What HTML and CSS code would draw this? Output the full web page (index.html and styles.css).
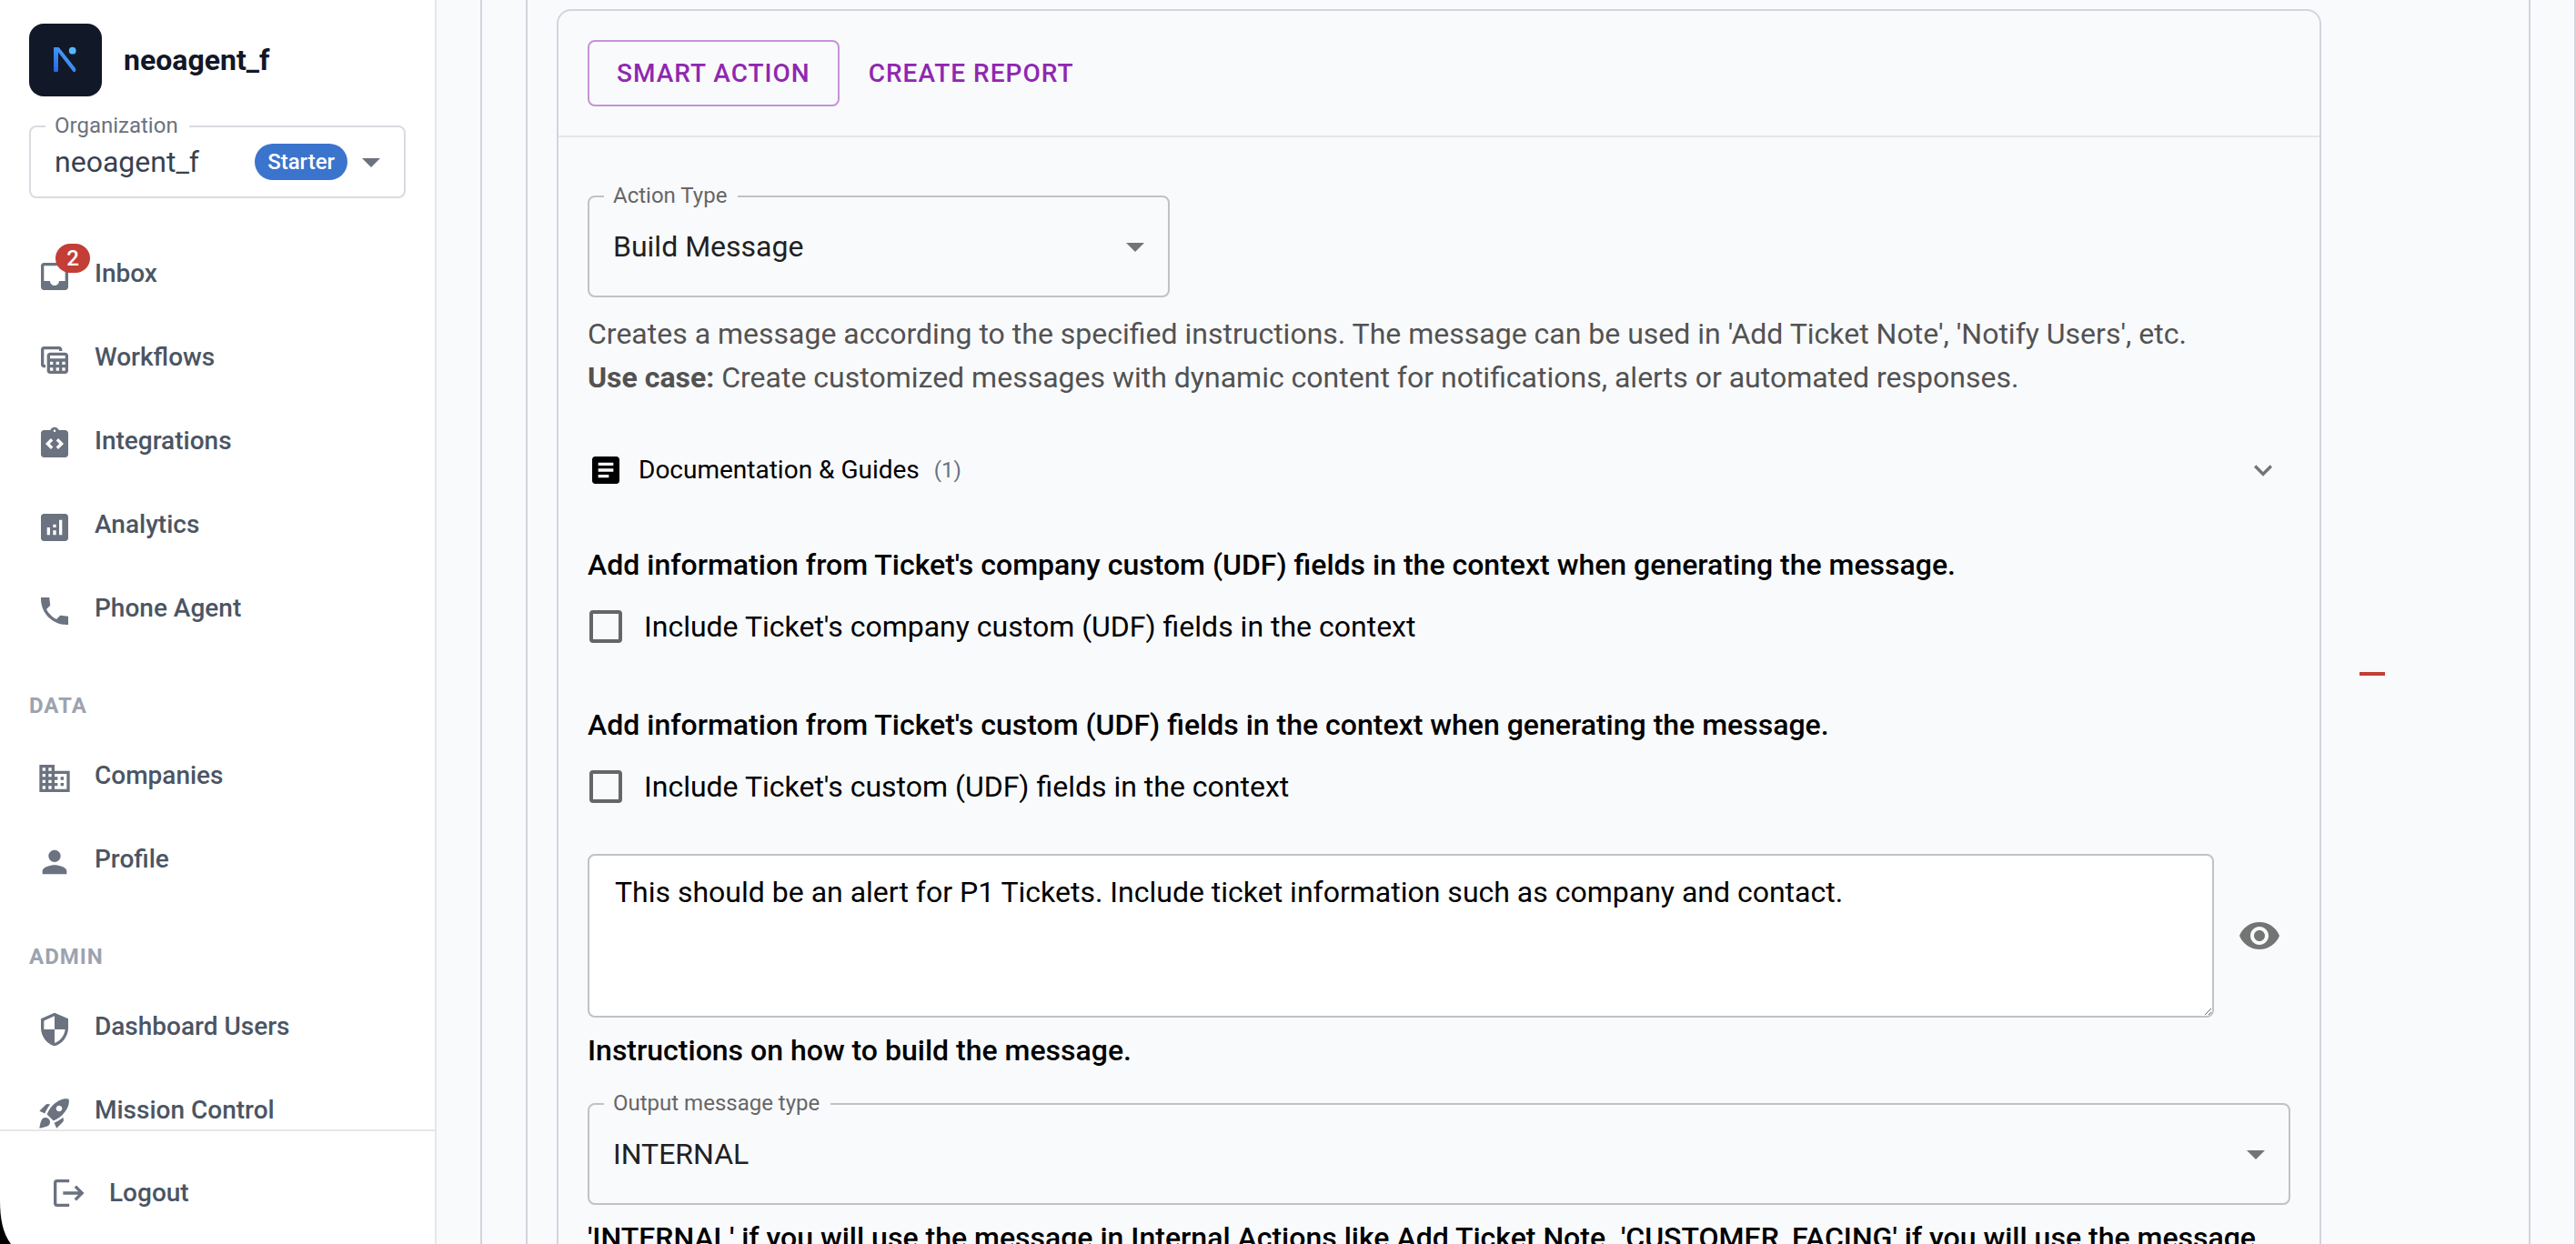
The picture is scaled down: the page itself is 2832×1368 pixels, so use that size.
FILE: index.html
```html
<!DOCTYPE html>
<html lang="en">
<head>
<meta charset="utf-8">
<meta name="viewport" content="width=device-width, initial-scale=1">
<title>neoagent_f – Workflows</title>
<link rel="stylesheet" href="styles.css">
</head>
<body>
<div class="app">
  <aside class="sidebar">
    <header class="brand">
      <svg class="brand-logo" viewBox="0 0 80 80" aria-hidden="true">
        <defs>
          <linearGradient id="logo-blue" x1="27" y1="53" x2="52" y2="26" gradientUnits="userSpaceOnUse">
            <stop offset="0" stop-color="#2563eb"/>
            <stop offset="1" stop-color="#56b8fb"/>
          </linearGradient>
        </defs>
        <rect width="80" height="80" rx="16" fill="#111827"/>
        <path d="M27 26h4.500c1 0 1.600.4 2.200 1.200L50.500 48.500c.9 1.200.9 2.400.6 3.600-.3 1-1.600 1.600-2.700.7L32 31.500V51.500c0 1.200-1 1.800-2.500 1.800S27 52.700 27 51.500z" fill="url(#logo-blue)"/>
        <circle cx="47.700" cy="29.700" r="3.900" fill="#56b8fb"/>
      </svg>
      <span class="brand-name">neoagent_f</span>
    </header>

    <div class="field org-field">
      <label class="field-label" for="organization">Organization</label>
      <select class="field-select" id="organization"><option>neoagent_f</option></select>
      <span class="plan-chip">Starter</span>
      <svg class="field-arrow" viewBox="0 0 24 24" aria-hidden="true"><path d="m7 10 5 5 5-5z"/></svg>
    </div>

    <nav class="nav">
      <a class="nav-item" href="#inbox">
        <span class="nav-icon">
          <svg viewBox="0 0 24 24" aria-hidden="true"><path d="M19 3H4.990c-1.110 0-1.980.89-1.980 2L3 19c0 1.100.88 2 1.990 2H19c1.100 0 2-.9 2-2V5c0-1.110-.9-2-2-2m0 12h-4c0 1.660-1.350 3-3 3s-3-1.340-3-3H4.990V5H19z"/></svg>
          <span class="nav-badge">2</span>
        </span>
        Inbox
      </a>
      <a class="nav-item" href="#workflows">
        <span class="nav-icon"><svg viewBox="0 0 24 24" aria-hidden="true"><path fill-rule="evenodd" d="M19 7H9c-1.100 0-2 .9-2 2v10c0 1.100.9 2 2 2h10c1.100 0 2-.9 2-2V9c0-1.100-.9-2-2-2m0 2v2H9V9zm-6 6v-2h2v2zm2 2v2h-2v-2zm-4-2H9v-2h2zm6-2h2v2h-2zm-8 4h2v2H9zm8 2v-2h2v2zM6 17H5c-1.100 0-2-.9-2-2V5c0-1.100.9-2 2-2h10c1.100 0 2 .9 2 2v1h-2V5H5v10h1z"/></svg></span>
        Workflows
      </a>
      <a class="nav-item" href="#integrations">
        <span class="nav-icon"><svg viewBox="0 0 24 24" aria-hidden="true"><path fill-rule="evenodd" d="M19 3h-4.180C14.400 1.840 13.300 1 12 1s-2.400.84-2.820 2H5c-1.100 0-2 .9-2 2v14c0 1.100.9 2 2 2h14c1.100 0 2-.9 2-2V5c0-1.100-.9-2-2-2m-8 11.170L9.590 15.590 6 12l3.590-3.590L11 9.830 8.830 12zm1-9.920c-.41 0-.75-.34-.75-.75s.34-.75.75-.75.75.34.75.75-.34.75-.75.75m2.410 11.340L13 14.170 15.170 12 13 9.830l1.410-1.420L18 12z"/></svg></span>
        Integrations
      </a>
      <a class="nav-item" href="#analytics">
        <span class="nav-icon"><svg viewBox="0 0 24 24" aria-hidden="true"><path fill-rule="evenodd" d="M19 3H5c-1.100 0-2 .9-2 2v14c0 1.100.9 2 2 2h14c1.100 0 2-.9 2-2V5c0-1.100-.9-2-2-2M9 17H7v-5h2zm4 0h-2v-3h2zm0-5h-2v-2h2zm4 5h-2V7h2z"/></svg></span>
        Analytics
      </a>
      <a class="nav-item" href="#phone-agent">
        <span class="nav-icon"><svg viewBox="0 0 24 24" aria-hidden="true"><path d="m21 15.460-5.270-.61-2.520 2.520c-2.830-1.440-5.150-3.750-6.590-6.590l2.530-2.530L8.540 3H3.030C2.450 13.180 10.820 21.550 21 20.970z"/></svg></span>
        Phone Agent
      </a>

      <h2 class="nav-heading">DATA</h2>
      <a class="nav-item" href="#companies">
        <span class="nav-icon"><svg viewBox="0 0 24 24" aria-hidden="true"><path fill-rule="evenodd" d="M12 7V3H2v18h20V7zM6 19H4v-2h2zm0-4H4v-2h2zm0-4H4V9h2zm0-4H4V5h2zm4 12H8v-2h2zm0-4H8v-2h2zm0-4H8V9h2zm0-4H8V5h2zm10 12h-8v-2h2v-2h-2v-2h2v-2h-2V9h8zm-2-8h-2v2h2zm0 4h-2v2h2z"/></svg></span>
        Companies
      </a>
      <a class="nav-item" href="#profile">
        <span class="nav-icon"><svg viewBox="0 0 24 24" aria-hidden="true"><path d="M12 12c2.210 0 4-1.790 4-4s-1.790-4-4-4-4 1.790-4 4 1.790 4 4 4m0 2c-2.670 0-8 1.340-8 4v2h16v-2c0-2.660-5.330-4-8-4"/></svg></span>
        Profile
      </a>

      <h2 class="nav-heading">ADMIN</h2>
      <a class="nav-item" href="#dashboard-users">
        <span class="nav-icon"><svg viewBox="0 0 24 24" aria-hidden="true"><path d="M12 1 3 5v6c0 5.550 3.840 10.740 9 12 5.160-1.260 9-6.450 9-12V5zm0 10.990h7c-.53 4.120-3.280 7.790-7 8.940V12H5V6.300l7-3.110z"/></svg></span>
        Dashboard Users
      </a>
      <a class="nav-item" href="#mission-control">
        <span class="nav-icon"><svg viewBox="0 0 24 24" aria-hidden="true"><path fill-rule="evenodd" d="M9.190 6.350c-2.040 2.290-3.440 5.580-3.570 5.890L2 10.690l4.050-4.050c.47-.47 1.150-.68 1.810-.55zM11.170 17s3.740-1.550 5.890-3.700c5.400-5.400 4.500-9.620 4.210-10.570-.95-.3-5.170-1.190-10.570 4.210C8.550 9.090 7 12.830 7 12.830zm6.480-2.190c-2.290 2.040-5.580 3.440-5.890 3.570L13.310 22l4.050-4.050c.47-.47.68-1.150.55-1.810zM9 18c0 .83-.34 1.580-.88 2.120C6.940 21.300 2 22 2 22s.7-4.940 1.880-6.120C4.420 15.340 5.170 15 6 15c1.660 0 3 1.340 3 3m4-9c0-1.100.9-2 2-2s2 .9 2 2-.9 2-2 2-2-.9-2-2"/></svg></span>
        Mission Control
      </a>
    </nav>

    <footer class="sidebar-footer">
      <button class="logout" type="button">
        <svg class="logout-icon" viewBox="0 0 24 24" aria-hidden="true"><path d="M13.300 4H5.200Q4 4 4 5.200v13.600Q4 20 5.200 20h8.100"/><path d="M9.200 12h12.300M17.300 7.600l4.400 4.400-4.400 4.400"/></svg>
        Logout
      </button>
    </footer>
  </aside>

  <main class="main">
    <section class="workflow">
      <div class="step">
        <div class="step-row">
          <article class="card">
            <div class="card-tabs">
              <button class="tab tab-active" type="button">SMART ACTION</button>
              <button class="tab" type="button">CREATE REPORT</button>
            </div>
            <form class="card-body">
              <div class="field action-field">
                <label class="field-label" for="action-type">Action Type</label>
                <select class="field-select" id="action-type"><option>Build Message</option></select>
                <svg class="field-arrow" viewBox="0 0 24 24" aria-hidden="true"><path d="m7 10 5 5 5-5z"/></svg>
              </div>
              <p class="description">Creates a message according to the specified instructions. The message can be used in 'Add Ticket Note', 'Notify Users', etc.<br><strong>Use case:</strong> Create customized messages with dynamic content for notifications, alerts or automated responses.</p>

              <button class="docs" type="button">
                <svg class="docs-icon" viewBox="0 0 24 24" aria-hidden="true"><path fill-rule="evenodd" d="M19 3H5c-1.100 0-2 .9-2 2v14c0 1.100.9 2 2 2h14c1.100 0 2-.9 2-2V5c0-1.100-.9-2-2-2m-5 14H7v-2h7zm3-4H7v-2h10zm0-4H7V7h10z"/></svg>
                <span class="docs-title">Documentation &amp; Guides</span>
                <span class="docs-count">(1)</span>
                <svg class="docs-chevron" viewBox="0 0 24 24" aria-hidden="true"><path d="M16.590 8.590 12 13.170 7.410 8.590 6 10l6 6 6-6z"/></svg>
              </button>

              <div class="options">
                <div class="option">
                  <p class="hint">Add information from Ticket's company custom (UDF) fields in the context when generating the message.</p>
                  <label class="check"><input class="check-box" type="checkbox">Include Ticket's company custom (UDF) fields in the context</label>
                </div>
                <div class="option">
                  <p class="hint">Add information from Ticket's custom (UDF) fields in the context when generating the message.</p>
                  <label class="check"><input class="check-box" type="checkbox">Include Ticket's custom (UDF) fields in the context</label>
                </div>
              </div>

              <div class="message-row">
                <textarea class="message" aria-labelledby="message-hint">This should be an alert for P1 Tickets. Include ticket information such as company and contact.</textarea>
                <button class="icon-button preview" type="button" aria-label="Preview">
                  <svg viewBox="0 0 24 24" aria-hidden="true"><path d="M12 4.500C7 4.500 2.730 7.610 1 12c1.730 4.390 6 7.500 11 7.500s9.270-3.110 11-7.500c-1.730-4.390-6-7.500-11-7.500M12 17c-2.760 0-5-2.240-5-5s2.240-5 5-5 5 2.240 5 5-2.240 5-5 5m0-8c-1.660 0-3 1.340-3 3s1.340 3 3 3 3-1.340 3-3-1.340-3-3-3"/></svg>
                </button>
              </div>
              <p class="hint message-hint" id="message-hint">Instructions on how to build the message.</p>

              <div class="field output-field">
                <label class="field-label" for="output-type">Output message type</label>
                <select class="field-select" id="output-type"><option>INTERNAL</option></select>
                <svg class="field-arrow" viewBox="0 0 24 24" aria-hidden="true"><path d="m7 10 5 5 5-5z"/></svg>
              </div>
              <p class="hint output-hint">'INTERNAL' if you will use the message in Internal Actions like Add Ticket Note. 'CUSTOMER_FACING' if you will use the message</p>
            </form>
          </article>
          <div class="step-actions">
            <button class="icon-button remove" type="button" aria-label="Remove action">
              <svg viewBox="0 0 24 24" aria-hidden="true"><path d="M19 13H5v-2h14z"/></svg>
            </button>
          </div>
        </div>
      </div>
    </section>
  </main>
</div>
<svg class="window-corner" viewBox="0 0 12 48" aria-hidden="true"><path d="M0 0C0 20 3 36 12 48H0z"/></svg>
</body>
</html>
```
FILE: styles.css
```css
:root {
  --page: #f9fafc;
  --frame: #d3d5dd;
  --rule: #e5e7eb;
  --outline: #c1c2c4;
  --slate: #6b7280;
  --slate-dark: #4b5563;
  --purple: #9027b0;
  --red: #c23e36;
}

* {
  box-sizing: border-box;
}

body {
  margin: 0;
  height: 100vh;
  overflow: hidden;
  background: var(--page);
  color: #000;
  font-family: Roboto, "Liberation Sans", sans-serif;
  font-size: 32px;
  line-height: 48px;
}

button,
select,
textarea {
  margin: 0;
  font: inherit;
  color: inherit;
}

button {
  border: 0;
  background: none;
  cursor: pointer;
}

p,
h2 {
  margin: 0;
}

svg {
  display: block;
  fill: currentColor;
}

.app {
  display: flex;
  height: 100%;
}

/* Sidebar */

.sidebar {
  display: flex;
  flex: 0 0 480px;
  flex-direction: column;
  border-right: 2px solid var(--rule);
  background: #fff;
}

.brand {
  display: flex;
  align-items: center;
  gap: 24px;
  padding: 26px 32px 32px;
}

.brand-logo {
  width: 80px;
  height: 80px;
}

.brand-name {
  color: #111827;
  font-weight: 700;
}

.nav {
  flex: 1;
  min-height: 0;
  overflow: hidden;
  padding: 41px 32px 0;
}

.nav-item {
  display: flex;
  align-items: center;
  gap: 24px;
  height: 84px;
  margin-bottom: 8px;
  padding-left: 8px;
  color: var(--slate-dark);
  font-size: 28px;
  font-weight: 500;
  text-decoration: none;
}

.nav-icon {
  position: relative;
  width: 40px;
  height: 40px;
  margin-top: 6px;
  color: var(--slate);
}

.nav-badge {
  position: absolute;
  top: -16px;
  left: 21px;
  min-width: 38px;
  height: 32px;
  padding: 0 6px;
  border-radius: 16px;
  background: var(--red);
  color: #fff;
  font-size: 24px;
  line-height: 32px;
  text-align: center;
}

.nav-heading {
  padding: 41px 0 19px;
  color: #9ca3af;
  font-size: 24px;
  font-weight: 700;
  letter-spacing: 1px;
  line-height: 32px;
}

.sidebar-footer {
  padding: 28px 0 16px;
  border-top: 2px solid var(--rule);
}

.logout {
  display: flex;
  align-items: center;
  gap: 26px;
  width: 100%;
  height: 80px;
  padding: 0 54px;
  color: var(--slate-dark);
  font-size: 28px;
  font-weight: 500;
}

.logout-icon {
  width: 40px;
  height: 40px;
  fill: none;
  stroke: var(--slate);
  stroke-width: 2;
}

/* Outlined select fields */

.field {
  position: relative;
  color: #212121;
}

.field-label {
  position: absolute;
  top: -16px;
  left: 18px;
  padding: 0 12px 0 10px;
  background: var(--page);
  color: #666;
  font-size: 24px;
  line-height: 32px;
}

.field-select {
  display: block;
  width: 100%;
  height: 112px;
  padding: 0 80px 0 26px;
  border: 2px solid var(--outline);
  border-radius: 8px;
  background: transparent;
  appearance: none;
}

.field-arrow {
  position: absolute;
  top: calc(50% - 24px);
  right: 14px;
  width: 48px;
  height: 48px;
  color: #737574;
  pointer-events: none;
}

.org-field {
  margin: 0 32px;
  color: #374151;
}

.org-field .field-label {
  background: #fff;
  color: var(--slate);
}

.org-field .field-select {
  height: 80px;
  border-color: #dadbe1;
}

.org-field .field-arrow {
  color: var(--slate);
}

.plan-chip {
  position: absolute;
  top: 20px;
  right: 64px;
  padding: 0 14px;
  border-radius: 20px;
  background: #3b74cd;
  color: #fff;
  font-size: 24px;
  font-weight: 500;
  line-height: 40px;
  pointer-events: none;
}

/* Nested workflow frames */

.main {
  flex: 1;
  min-width: 0;
  overflow: hidden;
  padding-left: 48px;
}

.workflow {
  min-height: 100%;
  padding: 0 48px;
  border: solid var(--frame);
  border-width: 0 2px;
}

.step {
  padding: 10px 32px;
  border: solid var(--frame);
  border-width: 0 2px;
}

.step-row {
  display: flex;
  align-items: center;
}

.step-actions {
  flex: 0 0 196px;
  padding-left: 16px;
}

.card {
  flex: 1;
  min-width: 0;
  border: 2px solid var(--frame);
  border-radius: 16px;
}

.card-tabs {
  display: flex;
  padding: 32px;
  border-bottom: 2px solid #e5e6e8;
}

.tab {
  height: 73px;
  padding: 0 30px;
  border: 2px solid transparent;
  border-radius: 8px;
  color: var(--purple);
  font-size: 28px;
  font-weight: 500;
  letter-spacing: 1px;
}

.tab-active {
  border-color: #c793d7;
}

.card-body {
  padding: 64px 32px 84px;
}

.action-field {
  width: 640px;
}

.description {
  margin-top: 16px;
  color: #525252;
}

.docs {
  display: flex;
  align-items: center;
  gap: 16px;
  width: 100%;
  height: 80px;
  margin: 38px 0 40px;
  padding: 0 10px 0 0;
}

.docs-icon,
.docs-chevron {
  width: 40px;
  height: 40px;
}

.docs-title {
  font-size: 28px;
}

.docs-count {
  color: var(--slate);
  font-size: 24px;
}

.docs-chevron {
  margin-left: auto;
  color: #737574;
}

.hint {
  font-weight: 500;
}

.options {
  display: flex;
  flex-direction: column;
  gap: 40px;
  margin-bottom: 30px;
}

.check {
  display: flex;
  align-items: center;
  gap: 24px;
  height: 88px;
  padding-left: 2px;
}

.check-box {
  width: 36px;
  height: 36px;
  margin: 0;
  border: 4px solid #666;
  border-radius: 4px;
  appearance: none;
}

.message-row {
  display: flex;
  align-items: center;
  gap: 10px;
}

.message {
  display: block;
  flex: 1;
  min-width: 0;
  height: 180px;
  padding: 16px 28px;
  border: 2px solid var(--outline);
  border-radius: 8px;
  background: #fff;
  resize: vertical;
}

.icon-button {
  flex: none;
  padding: 16px;
}

.icon-button svg {
  width: 48px;
  height: 48px;
}

.preview {
  margin-right: -6px;
  color: #737574;
}

.remove {
  color: var(--red);
}

.message-hint {
  margin: 12px 0 34px;
}

.output-hint {
  margin-top: 12px;
}

.window-corner {
  position: fixed;
  bottom: 0;
  left: 0;
  width: 12px;
  height: 48px;
}
```
